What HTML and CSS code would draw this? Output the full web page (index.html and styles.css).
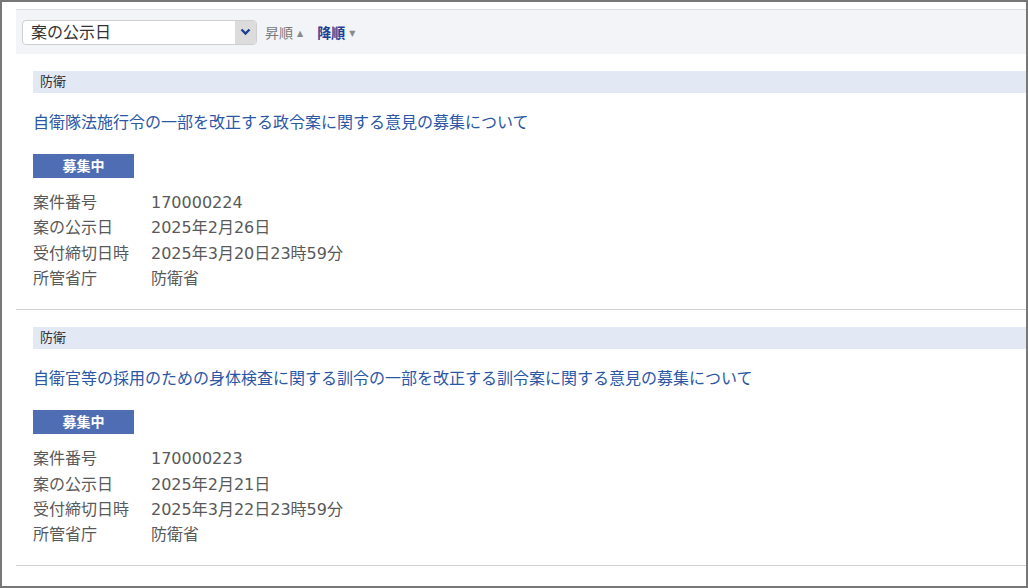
FILE: index.html
```html
<!DOCTYPE html>
<html lang="ja">

<head>
    <meta charset="UTF-8">
    <meta name="viewport" content="width=device-width, initial-scale=1.0">
    <title>意見募集案件一覧</title>
    <link rel="stylesheet" href="styles.css">
</head>

<body>

    <div class="frame">

        <div class="toolbar">
            <div class="sort-select">
                <span class="sort-value">案の公示日</span>
                <span class="sort-arrow">
                    <svg width="11" height="8" viewBox="0 0 11 8">
                        <path d="M1.5 1.5 L5.5 5.5 L9.5 1.5" fill="none" stroke="#1d3f8c" stroke-width="2.4" />
                    </svg>
                </span>
            </div>
            <a class="sort-link" href="#">昇順<span class="tri">&#9650;</span></a>
            <a class="sort-link active" href="#">降順<span class="tri">&#9660;</span></a>
        </div>

        <div class="item">
            <div class="category">防衛</div>
            <a class="title" href="#">自衛隊法施行令の一部を改正する政令案に関する意見の募集について</a>
            <div class="badge">募集中</div>
            <dl class="info">
                <dt>案件番号</dt>
                <dd>170000224</dd>
                <dt>案の公示日</dt>
                <dd>2025年2月26日</dd>
                <dt>受付締切日時</dt>
                <dd>2025年3月20日23時59分</dd>
                <dt>所管省庁</dt>
                <dd>防衛省</dd>
            </dl>
        </div>

        <div class="item">
            <div class="category">防衛</div>
            <a class="title" href="#">自衛官等の採用のための身体検査に関する訓令の一部を改正する訓令案に関する意見の募集について</a>
            <div class="badge">募集中</div>
            <dl class="info">
                <dt>案件番号</dt>
                <dd>170000223</dd>
                <dt>案の公示日</dt>
                <dd>2025年2月21日</dd>
                <dt>受付締切日時</dt>
                <dd>2025年3月22日23時59分</dd>
                <dt>所管省庁</dt>
                <dd>防衛省</dd>
            </dl>
        </div>

    </div>

</body>

</html>
```

FILE: styles.css
```css
body {
    margin: 0;
    font-family: "DejaVu Sans", "Noto Sans CJK JP", sans-serif;
    color: #595959;
}

.frame {
    width: 1028px;
    height: 588px;
    box-sizing: border-box;
    border: 2px solid #777;
    padding: 7px 0 0 14px;
    overflow: hidden;
}

.toolbar {
    display: flex;
    align-items: center;
    height: 44px;
    padding-left: 6px;
    background-color: #f3f4f7;
    border-top: 1px solid #dcdce4;
}

.sort-select {
    display: flex;
    width: 235px;
    height: 25px;
    box-sizing: border-box;
    border: 1px solid #cfcfcf;
    border-radius: 4px;
    background-color: white;
    overflow: hidden;
}

.sort-value {
    flex-grow: 1;
    padding-left: 8px;
    font-size: 16px;
    line-height: 23px;
    color: #333;
}

.sort-arrow {
    width: 21px;
    display: flex;
    align-items: center;
    justify-content: center;
    background-color: #dcdcdc;
}

.sort-link {
    margin-left: 8px;
    font-size: 14px;
    color: #7a7a7a;
    text-decoration: none;
}

.sort-link.active {
    margin-left: 14px;
    font-weight: bold;
    color: #1d4193;
}

.tri {
    margin-left: 4px;
    font-size: 8px;
    color: #8a8a8a;
    vertical-align: 2px;
}

.item {
    padding: 17px 0 17.5px 17px;
    border-bottom: 1px solid #d0d0d8;
}

.category {
    height: 22px;
    padding-left: 7px;
    font-size: 13px;
    line-height: 22px;
    color: #333;
    background-color: #e3e9f4;
}

.title {
    display: block;
    margin-top: 19px;
    font-size: 16px;
    line-height: 22px;
    color: #2b57a6;
    text-decoration: none;
}

.badge {
    width: 101px;
    height: 24px;
    margin-top: 20px;
    font-size: 14px;
    font-weight: bold;
    line-height: 24px;
    text-align: center;
    color: white;
    background-color: #4f6db3;
}

.info {
    display: grid;
    grid-template-columns: 118px auto;
    margin: 12px 0 0 0;
    font-size: 16px;
    line-height: 25.4px;
}

.info dt,
.info dd {
    margin: 0;
}
```
